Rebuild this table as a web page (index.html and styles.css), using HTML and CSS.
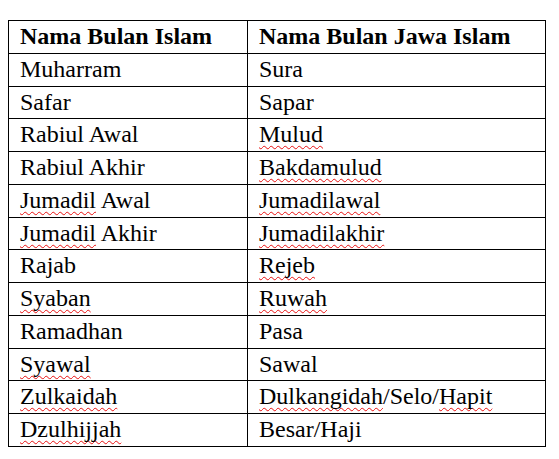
FILE: index.html
```html
<!DOCTYPE html>
<html>
<head>
<meta charset="utf-8">
<link rel="stylesheet" href="styles.css">
</head>
<body>
<table class="months">
  <thead>
    <tr><th class="col-a">Nama Bulan Islam</th><th>Nama Bulan Jawa Islam</th></tr>
  </thead>
  <tbody>
    <tr><td>Muharram</td><td>Sura</td></tr>
    <tr><td>Safar</td><td>Sapar</td></tr>
    <tr><td>Rabiul Awal</td><td><span class="sp">Mulud</span></td></tr>
    <tr><td>Rabiul Akhir</td><td><span class="sp">Bakdamulud</span></td></tr>
    <tr><td><span class="sp">Jumadil</span> Awal</td><td><span class="sp">Jumadilawal</span></td></tr>
    <tr><td><span class="sp">Jumadil</span> Akhir</td><td><span class="sp">Jumadilakhir</span></td></tr>
    <tr><td>Rajab</td><td><span class="sp">Rejeb</span></td></tr>
    <tr><td><span class="sp">Syaban</span></td><td><span class="sp">Ruwah</span></td></tr>
    <tr><td>Ramadhan</td><td>Pasa</td></tr>
    <tr><td><span class="sp">Syawal</span></td><td>Sawal</td></tr>
    <tr><td><span class="sp">Zulkaidah</span></td><td><span class="sp">Dulkangidah</span>/Selo/<span class="sp">Hapit</span></td></tr>
    <tr><td><span class="sp">Dzulhijjah</span></td><td>Besar/Haji</td></tr>
  </tbody>
</table>
</body>
</html>
```

FILE: styles.css
```css
html, body {
  margin: 0;
  padding: 0;
  background: #fff;
}
body {
  padding: 20px 0 0 8px;
  font-family: "Liberation Serif", "Times New Roman", serif;
  font-size: 24px;
  color: #000;
}
.months {
  border-collapse: collapse;
  width: 538px;
  table-layout: fixed;
}
.months th,
.months td {
  border: 1px solid #000;
  height: 32.75px;
  box-sizing: border-box;
  padding: 0 10px 0 11px;
  line-height: 30px;
  vertical-align: top;
  text-align: left;
  white-space: nowrap;
}
.months th {
  font-weight: bold;
}
.months .col-a {
  width: 239px;
}
.sp {
  text-decoration: underline wavy #e81010;
  text-decoration-thickness: 1px;
  text-underline-offset: 3px;
  text-decoration-skip-ink: none;
}
```
